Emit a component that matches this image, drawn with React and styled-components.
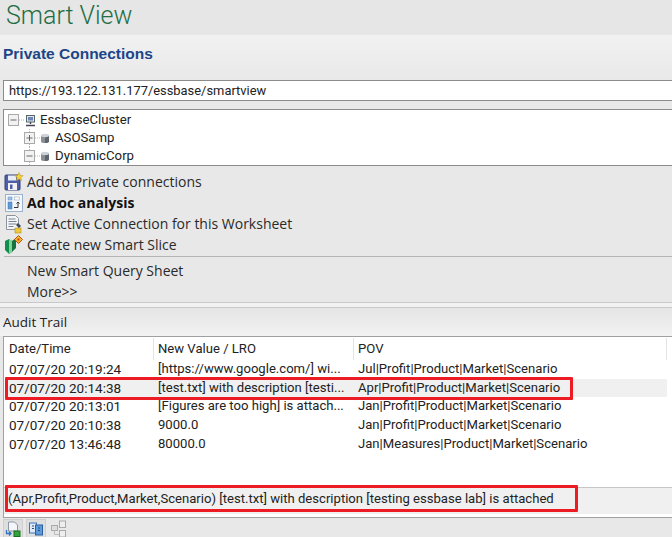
import React from "react";
import styled, { createGlobalStyle } from "styled-components";

const GlobalStyle = createGlobalStyle`
    html, body {
        margin: 0;
        padding: 0;
        background: #e8e8e8;
    }
    body {
        font-family: "Open Sans", "Noto Sans", sans-serif;
        color: #222;
        overflow: hidden;
    }
`;

const rows = [
    { date: "07/07/20 20:19:24", value: "[https://www.google.com/] wi...", pov: "Jul|Profit|Product|Market|Scenario" },
    { date: "07/07/20 20:14:38", value: "[test.txt] with description [testi...", pov: "Apr|Profit|Product|Market|Scenario", active: true },
    { date: "07/07/20 20:13:01", value: "[Figures are too high] is attach...", pov: "Jan|Profit|Product|Market|Scenario" },
    { date: "07/07/20 20:10:38", value: "9000.0", pov: "Jan|Profit|Product|Market|Scenario" },
    { date: "07/07/20 13:46:48", value: "80000.0", pov: "Jan|Measures|Product|Market|Scenario" },
];

// box plus the dotted tree lines that run out of it
const ExpandBox = ({ open, child }) => (
    <svg width="16" height="18" viewBox="0 0 16 18">
        {child && <path d="M5.5 0v3M5.5 15v3" stroke="#b5b5b5" strokeDasharray="1 1" />}
        <path d="M11 9h5" stroke="#b5b5b5" strokeDasharray="1 1" />
        <rect x="0.5" y="3.5" width="10" height="11" fill="#f2f2f2" stroke="#a9a9a9" />
        <path d={open ? "M2.5 9h6" : "M2.5 9h6M5.5 6v6"} stroke="#666" fill="none" />
    </svg>
);

const ServerIcon = () => (
    <svg width="13" height="13" viewBox="0 0 13 13">
        <rect x="2.5" y="1.5" width="8" height="6.5" fill="#dfe6f2" stroke="#566" />
        <rect x="4" y="3" width="5" height="3.5" fill="#6f86b5" />
        <path d="M6.5 8v2M2 11.5h9" stroke="#445" strokeWidth="1.4" />
    </svg>
);

const CylinderIcon = () => (
    <svg width="10" height="11" viewBox="0 0 10 11">
        <path d="M1 2.5v6c0 2 8 2 8 0v-6z" fill="#8a8f96" />
        <path d="M5 3v7c2 0 4-.6 4-1.5v-6z" fill="#5f656d" />
        <ellipse cx="5" cy="2.5" rx="4" ry="1.7" fill="#cfd3d8" />
    </svg>
);

const SaveIcon = () => (
    <svg width="20" height="19" viewBox="0 0 20 19">
        <rect x="1" y="3" width="15" height="15" rx="1" fill="#4e5fa8" stroke="#34407c" />
        <rect x="4" y="3.5" width="8" height="5" fill="#e8ecf6" />
        <rect x="4" y="11" width="9" height="7" fill="#f2f2f2" />
        <rect x="6" y="12.5" width="2.5" height="4.5" fill="#4e5fa8" />
        <path d="M15 0.5l1.2 2.8 3 .3-2.3 2 .7 3-2.6-1.6-2.6 1.6.7-3-2.3-2 3-.3z" fill="#f4d23c" stroke="#b8962a" strokeWidth="0.5" />
    </svg>
);

const AdhocIcon = () => (
    <svg width="18" height="18" viewBox="0 0 18 18">
        <rect x="0.5" y="0.5" width="17" height="17" fill="#f4f8fc" stroke="#9bb2cc" />
        <rect x="3" y="3" width="4" height="3" fill="#9fc2e8" stroke="#5c88bd" strokeWidth="0.5" />
        <rect x="9.5" y="3" width="5" height="3" fill="#fff" stroke="#8b9cb0" strokeWidth="0.5" />
        <rect x="3" y="8" width="4" height="7" fill="#5f9ad8" stroke="#3d72ae" strokeWidth="0.5" />
        <path d="M9 13.5h4V8M11.5 9.5L13 8l1.5 1.5" stroke="#333" fill="none" />
    </svg>
);

const SheetIcon = () => (
    <svg width="20" height="20" viewBox="0 0 20 20">
        <path d="M2.5 1.5h9l3 3v11h-12z" fill="#f3f5f8" stroke="#8f949c" />
        <path d="M4.5 5h7M4.5 7.5h8M4.5 10h8M4.5 12.5h5" stroke="#7b8492" />
        <path d="M14 9l3 3-2 2-3-3z" fill="#3c4a5c" />
        <rect x="11" y="14" width="6" height="5" fill="#f0c838" stroke="#b08f20" strokeWidth="0.6" />
    </svg>
);

const SliceIcon = () => (
    <svg width="20" height="20" viewBox="0 0 20 20">
        <path d="M1 6l4-2 3 2v11l-3 2-4-4z" fill="#0f8f4a" />
        <path d="M8 6l4-3v10l-4 4z" fill="#16733f" />
        <path d="M5 4l3 2v11l-3 2z" fill="#7ed29c" />
        <path d="M14.5 0.5l4 4-4 4-4-4z" fill="#f3b62d" stroke="#b5501d" />
        <rect x="13.5" y="3.5" width="2" height="2" fill="#c9401f" />
    </svg>
);

const ToolDocIcon = () => (
    <svg width="16" height="16" viewBox="0 0 16 16">
        <path d="M3.5 1h6l3 3v6h-9z" fill="#f3f6fa" stroke="#8c97a6" />
        <path d="M1.5 9v3.5h4M4 10.5l2 2-2 2" stroke="#2f74c0" fill="none" strokeWidth="1.3" />
        <rect x="9" y="10" width="6" height="5.5" fill="#2fa53a" stroke="#1a6d22" />
    </svg>
);

const ToolSyncIcon = () => (
    <svg width="16" height="16" viewBox="0 0 16 16">
        <rect x="1.5" y="2" width="7" height="10" fill="#dfeaf7" stroke="#3d75b8" />
        <rect x="7.5" y="4" width="7" height="10" fill="#5f9ad8" stroke="#2b5f9f" />
        <path d="M4 5h2M4 7.5h2M10 7h2M10 9.5h2" stroke="#1d4f8c" />
    </svg>
);

const ToolGhostIcon = () => (
    <svg width="18" height="18" viewBox="0 0 18 18">
        <rect x="9.5" y="1" width="6" height="6.5" fill="#eee" stroke="#aaa" />
        <rect x="9.5" y="10.5" width="6" height="6.5" fill="#eee" stroke="#aaa" />
        <rect x="1.5" y="5.5" width="6" height="5" fill="#ddd" stroke="#aaa" />
        <path d="M4.5 10.5v4h5" stroke="#bbb" fill="none" />
    </svg>
);

const App = () => {
    return (
        <Page>
            <GlobalStyle />
            <TitleBar>Smart View</TitleBar>
            <ConnectionsHeader>
                <Heading>Private Connections</Heading>
            </ConnectionsHeader>
            <UrlField>https://193.122.131.177/essbase/smartview</UrlField>
            <Tree>
                <TreeRow>
                    <ExpandBox open />
                    <ServerIcon />
                    <TreeLabel>EssbaseCluster</TreeLabel>
                </TreeRow>
                <TreeRow $child>
                    <ExpandBox child />
                    <CylinderIcon />
                    <TreeLabel $child>ASOSamp</TreeLabel>
                </TreeRow>
                <TreeRow $child>
                    <ExpandBox open child />
                    <CylinderIcon />
                    <TreeLabel $child>DynamicCorp</TreeLabel>
                </TreeRow>
            </Tree>
            <MenuGroup>
                <MenuItem><IconSlot><SaveIcon /></IconSlot>Add to Private connections</MenuItem>
                <MenuItem $bold><IconSlot><AdhocIcon /></IconSlot>Ad hoc analysis</MenuItem>
                <MenuItem><IconSlot><SheetIcon /></IconSlot>Set Active Connection for this Worksheet</MenuItem>
                <MenuItem><IconSlot><SliceIcon /></IconSlot>Create new Smart Slice</MenuItem>
            </MenuGroup>
            <MenuDivider />
            <MenuGroup>
                <MenuItem><IconSlot />New Smart Query Sheet</MenuItem>
                <MenuItem><IconSlot />More&gt;&gt;</MenuItem>
            </MenuGroup>
            <Splitter />
            <AuditHeader>Audit Trail</AuditHeader>
            <AuditPanel>
                <TableArea>
                    <HeaderRow>
                        <HeaderCell>Date/Time</HeaderCell>
                        <HeaderCell>New Value / LRO</HeaderCell>
                        <HeaderCell>POV</HeaderCell>
                    </HeaderRow>
                    {rows.map((row) => (
                        <DataRow key={row.date} $active={row.active}>
                            <DateCell>{row.date}</DateCell>
                            <Cell>{row.value}</Cell>
                            <Cell>{row.pov}</Cell>
                        </DataRow>
                    ))}
                    <RowHighlight />
                </TableArea>
                <DetailBar>
                    (Apr,Profit,Product,Market,Scenario) [test.txt] with description [testing essbase lab] is attached
                    <DetailHighlight />
                </DetailBar>
            </AuditPanel>
            <Toolbar>
                <ToolButton><ToolDocIcon /></ToolButton>
                <ToolButton><ToolSyncIcon /></ToolButton>
                <ToolButton $disabled><ToolGhostIcon /></ToolButton>
            </Toolbar>
        </Page>
    );
};

const Page = styled.div`
    width: 672px;
    height: 537px;
    display: flex;
    flex-direction: column;
    overflow: hidden;
    background: #e8e8e8;
    font-size: 13.5px;
`;

const TitleBar = styled.div`
    height: 35px;
    flex: none;
    padding-left: 6px;
    background: #e6e6e6;
    color: #1f6e45;
    font-family: Roboto, sans-serif;
    font-size: 25px;
    font-weight: 300;
    line-height: 32px;
`;

const ConnectionsHeader = styled.div`
    height: 45px;
    flex: none;
    padding-left: 3px;
    background: linear-gradient(#f1f1f1, #e9e9e9);
`;

const Heading = styled.h2`
    margin: 0;
    padding-top: 9px;
    color: #1c4587;
    font-family: "Liberation Sans", Arial, sans-serif;
    font-size: 15.5px;
    font-weight: bold;
    line-height: 19px;
`;

const UrlField = styled.div`
    height: 19px;
    flex: none;
    margin-left: 3px;
    padding-left: 5px;
    background: #fff;
    border: 1px solid #8b8b8b;
    border-right: none;
    font-family: Roboto, sans-serif;
    font-size: 12.9px;
    line-height: 19px;
`;

const Tree = styled.div`
    height: 57px;
    flex: none;
    margin: 8px 0 5px 3px;
    padding-top: 1px;
    box-sizing: border-box;
    background: #fff;
    border: 1px solid #8b8b8b;
    border-right: none;
    overflow: hidden;
    font-family: Roboto, sans-serif;
    font-size: 13.2px;
`;

const TreeRow = styled.div`
    height: 18px;
    display: flex;
    align-items: center;
    gap: 0;
    padding-left: ${(props) => (props.$child ? "20px" : "4px")};
`;

const TreeLabel = styled.span`
    margin-left: ${(props) => (props.$child ? "5px" : "3px")};
    line-height: 18px;
`;

const MenuGroup = styled.div`
    display: flex;
    flex-direction: column;
    flex: none;
`;

const MenuItem = styled.div`
    height: 21px;
    display: flex;
    align-items: center;
    font-weight: ${(props) => (props.$bold ? 700 : 400)};
    color: ${(props) => (props.$bold ? "#111" : "#2a2a2a")};
    font-size: 14px;
`;

const IconSlot = styled.span`
    width: 26px;
    padding-left: 1px;
    flex: none;
    display: flex;
    justify-content: center;
`;

const MenuDivider = styled.div`
    flex: none;
    height: 1px;
    margin: 1px 0 3px 4px;
    background: #b5b5b5;
`;

const Splitter = styled.div`
    height: 4px;
    flex: none;
    border-top: 1px solid #c8c8c8;
    border-bottom: 1px solid #c8c8c8;
    background: #f2f2f2;
`;

const AuditHeader = styled.div`
    height: 28px;
    flex: none;
    box-sizing: border-box;
    padding: 5px 0 0 3px;
    background: linear-gradient(#e4e4e4, #f2f2f2);
    font-size: 13.5px;
    line-height: 19px;
`;

const AuditPanel = styled.div`
    height: 182px;
    flex: none;
    box-sizing: border-box;
    margin-left: 3px;
    display: flex;
    flex-direction: column;
    background: #fff;
    border: 1px solid #a0a0a0;
    border-right: none;
    font-family: Roboto, sans-serif;
    font-size: 13.1px;
`;

const TableArea = styled.div`
    position: relative;
    height: 150px;
    box-sizing: border-box;
    flex: none;
    padding: 1px 0 0 1px;
`;

const columns = "149px 200px 313px";

const HeaderRow = styled.div`
    height: 22px;
    display: grid;
    grid-template-columns: ${columns};
    border-right: 1px solid #e3e3e3;
    margin-right: 5px;
`;

const HeaderCell = styled.div`
    padding-left: 4px;
    border-right: 1px solid #e3e3e3;
    line-height: 22px;

    &:last-child {
        border-right: none;
    }
`;

const DataRow = styled.div`
    height: 18.7px;
    display: grid;
    grid-template-columns: ${columns};
    background: ${(props) => (props.$active ? "#f0f0f0" : "transparent")};
    margin-right: 5px;
`;

const Cell = styled.div`
    padding-left: 4px;
    line-height: 18.7px;
    white-space: nowrap;
`;

const DateCell = styled(Cell)`
    font-size: 13.5px;
`;

const RowHighlight = styled.div`
    position: absolute;
    left: 1px;
    top: 40px;
    width: 568px;
    height: 23px;
    box-sizing: border-box;
    border: 3px solid #ed1c24;
    border-radius: 1px;
`;

const DetailBar = styled.div`
    position: relative;
    flex: 1;
    margin-bottom: 3px;
    padding-left: 4px;
    background: #f0f0f0;
    border-top: 1px solid #c6c6c6;
    line-height: 22px;
    white-space: nowrap;
`;

const DetailHighlight = styled.div`
    position: absolute;
    left: 1px;
    top: -3px;
    width: 573px;
    height: 27px;
    box-sizing: border-box;
    border: 3px solid #ed1c24;
    border-radius: 1px;
`;

const Toolbar = styled.div`
    flex: 1;
    display: flex;
    align-items: flex-end;
    gap: 3px;
    padding-left: 3px;
`;

const ToolButton = styled.div`
    width: 18px;
    height: 17px;
    display: flex;
    align-items: center;
    justify-content: center;
    border: 1px solid ${(props) => (props.$disabled ? "#e8e8e8" : "#cfcfcf")};
    border-bottom: none;
    background: ${(props) => (props.$disabled ? "transparent" : "#dedede")};
    overflow: hidden;
`;

export default App;
